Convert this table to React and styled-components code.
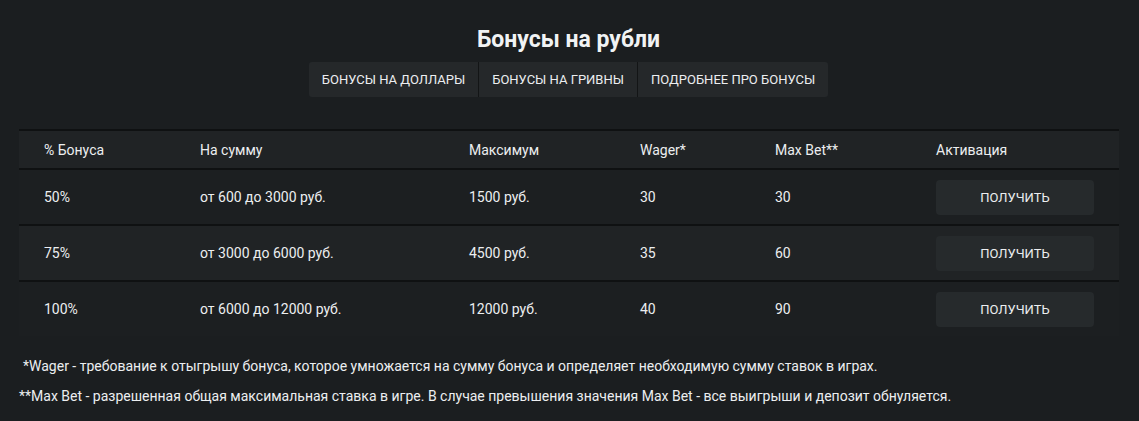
import React from "react";
import styled, { createGlobalStyle } from "styled-components";

const GlobalStyle = createGlobalStyle`
    html, body {
        margin: 0;
        padding: 0;
        background: #1b1e20;
    }
    body {
        font-family: Roboto, "Noto Sans", sans-serif;
        color: #eceef0;
    }
`;

const Page = styled.div`
    width: 1139px;
    height: 421px;
    box-sizing: border-box;
    padding: 24px 21px 0 19px;
    background: #1b1e20;
`;

const Title = styled.h2`
    margin: 0;
    text-align: center;
    font-size: 23px;
    font-weight: 700;
    line-height: 32px;
    color: #f1f3f4;
`;

const Tabs = styled.div`
    display: flex;
    justify-content: center;
    margin-top: 6px;
`;

const Tab = styled.a`
    display: block;
    padding: 0 13px;
    height: 35px;
    line-height: 35px;
    font-size: 13px;
    text-transform: uppercase;
    color: #eceef0;
    background: #25282a;
    border-left: 1px solid #131516;
    &:first-child {
        border-left: none;
        border-radius: 3px 0 0 3px;
    }
    &:last-child {
        border-radius: 0 3px 3px 0;
    }
`;

const Table = styled.div`
    margin-top: 32px;
    width: 1100px;
`;

const Row = styled.div`
    display: grid;
    grid-template-columns: 156px 269px 171px 135px 161px 208px;
    align-items: center;
    height: ${(p) => (p.head ? 37 : 54)}px;
    border-top: 2px solid #0f1112;
    background: ${(p) => (p.shade ? "#202325" : "#1c1f21")};
    font-size: 14px;
`;

const Cell = styled.div`
    padding-left: 25px;
`;

const GetButton = styled.button`
    display: block;
    width: 158px;
    height: 35px;
    border: none;
    border-radius: 4px;
    background: #262a2c;
    color: #eceef0;
    font-family: inherit;
    font-size: 13px;
    text-transform: uppercase;
    cursor: pointer;
`;

const Notes = styled.div`
    margin-top: 22px;
    font-size: 14px;
    line-height: 17px;
`;

const Note = styled.p`
    margin: 0 0 13px;
    padding-left: ${(p) => p.indent || 0}px;
`;

const rows = [
    ["50%", "от 600 до 3000 руб.", "1500 руб.", "30", "30"],
    ["75%", "от 3000 до 6000 руб.", "4500 руб.", "35", "60"],
    ["100%", "от 6000 до 12000 руб.", "12000 руб.", "40", "90"],
];

export default function App() {
    return (
        <Page>
            <GlobalStyle />
            <Title>Бонусы на рубли</Title>
            <Tabs>
                <Tab>Бонусы на доллары</Tab>
                <Tab>Бонусы на гривны</Tab>
                <Tab>Подробнее про бонусы</Tab>
            </Tabs>
            <Table>
                <Row head shade>
                    <Cell>% Бонуса</Cell>
                    <Cell>На сумму</Cell>
                    <Cell>Максимум</Cell>
                    <Cell>Wager*</Cell>
                    <Cell>Max Bet**</Cell>
                    <Cell>Активация</Cell>
                </Row>
                {rows.map((r, i) => (
                    <Row key={r[0]} shade={i % 2 === 1}>
                        {r.map((v, j) => (
                            <Cell key={j}>{v}</Cell>
                        ))}
                        <Cell>
                            <GetButton>Получить</GetButton>
                        </Cell>
                    </Row>
                ))}
            </Table>
            <Notes>
                <Note indent={4}>*Wager - требование к отыгрышу бонуса, которое умножается на сумму бонуса и определяет необходимую сумму ставок в играх.</Note>
                <Note>**Max Bet - разрешенная общая максимальная ставка в игре. В случае превышения значения Max Bet - все выигрыши и депозит обнуляется.</Note>
            </Notes>
        </Page>
    );
}
